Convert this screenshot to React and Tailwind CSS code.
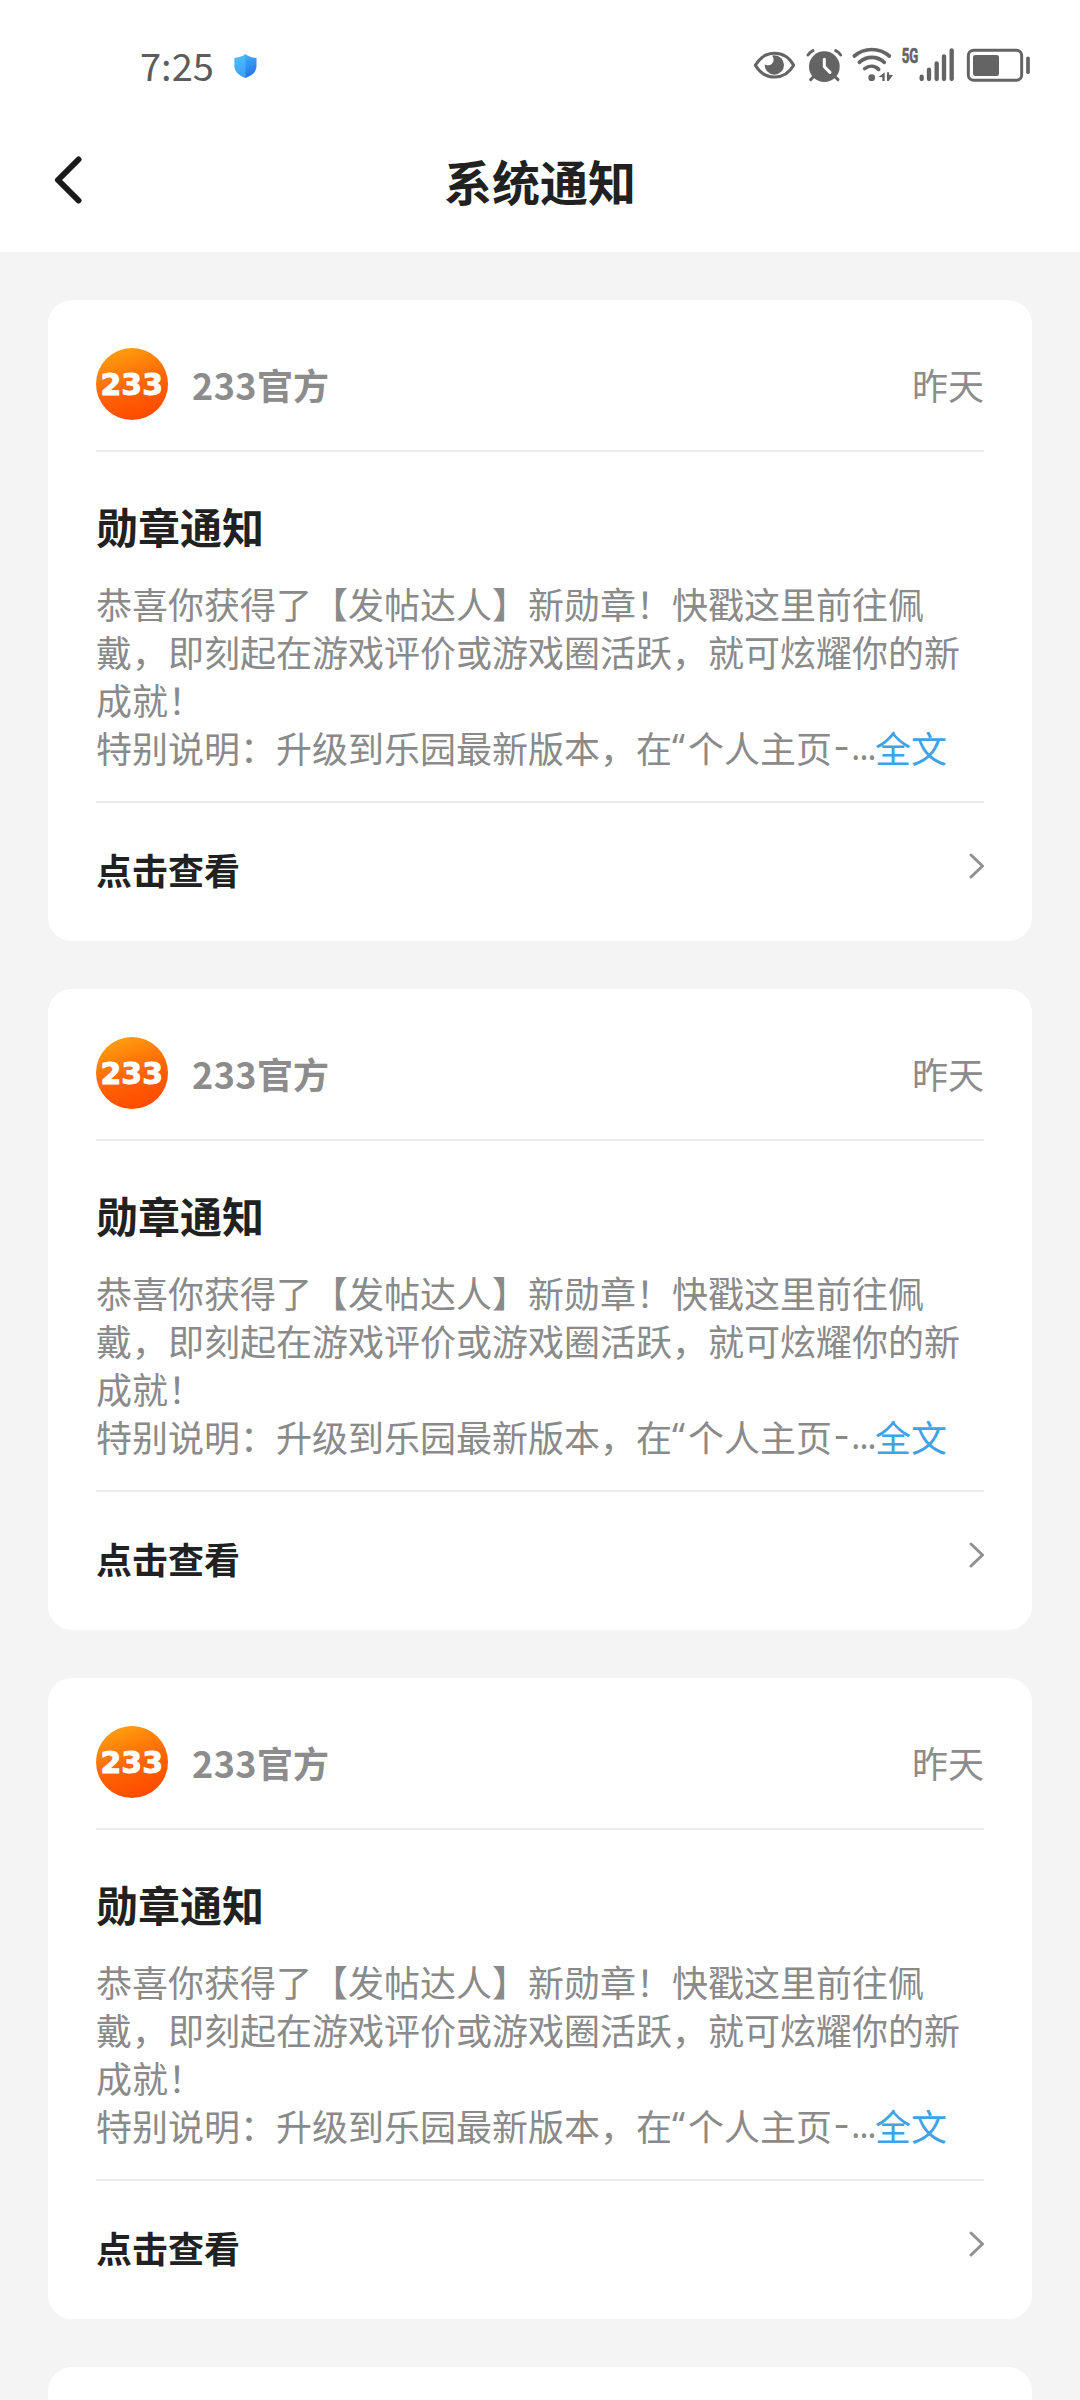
import React from 'react';

const notices = [1, 2, 3].map((id) => ({
  id,
  sender: '233官方',
  time: '昨天',
  title: '勋章通知',
  lines: ['恭喜你获得了【发帖达人】新勋章！快戳这里前往佩', '戴，即刻起在游戏评价或游戏圈活跃，就可炫耀你的新', '成就！'],
  action: '点击查看',
}));

const ShieldIcon = () => (
  <svg viewBox="0 0 68 72" className="w-[23px] h-6">
    <defs>
      <linearGradient id="shield" x1="0" y1="0" x2="0.3" y2="1">
        <stop offset="0" stopColor="#45b9f8" />
        <stop offset="1" stopColor="#2878ec" />
      </linearGradient>
    </defs>
    <path d="M34 0C43 8 54 11 67 12V36C67 54 52 65 34 72C16 65 1 54 1 36V12C14 11 25 8 34 0Z" fill="url(#shield)" />
    <path d="M34 0C25 8 14 11 1 12V36C1 54 16 65 34 72Z" fill="#5ccbff" opacity="0.45" />
  </svg>
);

const StatusIcons = () => (
  <div className="flex h-9 -mt-0.5 text-[#646464]">
    {/* Eye comfort */}
    <svg viewBox="36 36 150 108" className="w-[50px] h-9" fill="none" stroke="currentColor">
      <circle cx="103" cy="90" r="29" fill="currentColor" stroke="none" />
      <circle cx="84" cy="74" r="17" fill="white" stroke="none" />
      <path d="M46 91C74 43 134 43 161 91C134 138 74 138 46 91Z" strokeWidth="9" strokeLinejoin="round" />
    </svg>
    {/* Alarm */}
    <svg viewBox="186 36 138 108" className="w-[46px] h-9" fill="none" stroke="currentColor" strokeLinecap="round">
      <circle cx="253" cy="95" r="46" fill="currentColor" stroke="none" />
      <path d="M204 60Q210 51 219 47M302 60Q296 51 287 47" strokeWidth="9" />
      <path d="M220 126L212 134M286 126L294 134" strokeWidth="9" />
      <path d="M253 73V95L270 112" stroke="white" strokeWidth="9" strokeLinejoin="round" />
    </svg>
    {/* Wi-Fi */}
    <svg viewBox="324 36 150 108" className="w-[50px] h-9" fill="none" stroke="currentColor" strokeLinecap="round" strokeWidth="11">
      <path d="M343 63C373 37 418 37 448 63M358 82C380 62 411 62 433 82M374 101C387 91 404 91 416 103" />
      <circle cx="395" cy="128" r="10" fill="currentColor" stroke="none" />
      <path d="M416 126L434 112V138H427V127ZM441 112H447V119L459 120L446 138H441Z" fill="currentColor" stroke="none" />
    </svg>
    {/* Signal */}
    <svg viewBox="474 36 186 108" className="w-[62px] h-9 overflow-visible" fill="none" stroke="currentColor" strokeLinecap="round" strokeWidth="13">
      <text x="485" y="83" textLength="50" lengthAdjust="spacingAndGlyphs" fill="currentColor" strokeWidth="2" className="font-['Roboto','Noto_Sans_CJK_SC',sans-serif] text-[58px] font-bold">
        5G
      </text>
      <path d="M545 125V132M567 104V132M590 85V132M612 64V132M635 46V132" />
    </svg>
    {/* Battery */}
    <svg viewBox="660 36 216 108" className="w-[72px] h-9" fill="none" stroke="currentColor">
      <rect x="685" y="46" width="160" height="90" rx="16" strokeWidth="9" />
      <rect x="699" y="60" width="78" height="63" rx="7" fill="currentColor" stroke="none" />
      <path d="M864 70V112" strokeWidth="11" strokeLinecap="round" />
    </svg>
  </div>
);

const Avatar = () => (
  <svg viewBox="0 0 72 72" className="w-[72px] h-[72px] shrink-0">
    <defs>
      <linearGradient id="avatar" x1="0.2" y1="0" x2="0.55" y2="1">
        <stop offset="0" stopColor="#ffa310" />
        <stop offset="0.6" stopColor="#ff6205" />
        <stop offset="1" stopColor="#ff4b00" />
      </linearGradient>
    </defs>
    <circle cx="36" cy="36" r="36" fill="url(#avatar)" />
    <text x="4.5" y="47" textLength="62.5" lengthAdjust="spacingAndGlyphs" fill="white" stroke="white" strokeWidth="0.9" className="font-['DejaVu_Sans',sans-serif] text-[31px] font-bold">
      233
    </text>
  </svg>
);

const NoticeCard = ({ notice }) => (
  <article className="h-[641px] shrink-0 rounded-[24px] bg-white px-12">
    <div className="flex h-[152px] items-start border-b-2 border-[#ebebeb] pt-12">
      <Avatar />
      <span className="ml-6 mt-3 text-[36px] leading-[48px] font-bold text-[#8c8c8c]">
        <span className="tracking-[0.4px]">233</span>
        {notice.sender.slice(3)}
      </span>
      <span className="ml-auto mt-3 text-[36px] leading-[48px] text-[#8c8c8c]">{notice.time}</span>
    </div>

    <div className="h-[351px] border-b-2 border-[#ebebeb] pt-11">
      <h2 className="text-[42px] leading-[60px] font-bold text-[#212121]">{notice.title}</h2>
      <div className="mt-[23px] text-[36px] leading-[48px] text-[#8a8a8a] whitespace-nowrap">
        {notice.lines.map((line) => (
          <p key={line}>{line}</p>
        ))}
        <p className="flex">
          <span>特别说明：升级到乐园最新版本，在</span>
          <span className="w-4 font-['Noto_Sans','Noto_Sans_CJK_SC',sans-serif]">“</span>
          <span>个人主页</span>
          <span className="w-[19px] text-center font-['Inter',sans-serif]">-</span>
          <span className="w-6 font-['Open_Sans',sans-serif] tracking-[-1.3px]">...</span>
          <a className="text-[#3ea2e5]">全文</a>
        </p>
      </div>
    </div>

    <div className="flex items-center justify-between pt-[42px]">
      <span className="text-[36px] leading-[48px] font-bold text-[#212121]">{notice.action}</span>
      <svg viewBox="0 0 16 26" className="-mt-1.5 w-4 h-[26px]" fill="none" stroke="#919191" strokeWidth="3" strokeLinecap="round" strokeLinejoin="round">
        <path d="M3 2L14.5 13L3 24" />
      </svg>
    </div>
  </article>
);

export default function App() {
  return (
    <div className="flex h-[2400px] w-[1080px] flex-col overflow-hidden bg-[#f4f4f4] font-['Noto_Sans_CJK_SC',sans-serif]">
      <div className="flex h-[132px] shrink-0 items-center justify-between bg-white pl-[140px] pr-12">
        <div className="flex items-center">
          <span className="-mt-0.5 w-[94px] text-[38px] leading-[48px] font-normal text-[#5c5c5c]">7:25</span>
          <ShieldIcon />
        </div>
        <StatusIcons />
      </div>

      <header className="grid h-[120px] shrink-0 grid-cols-3 items-center bg-white pb-[22px]">
        <svg viewBox="0 0 28 48" className="-mt-0.5 ml-[54px] w-7 h-12" fill="none" stroke="#1a1a1a" strokeWidth="6" strokeLinecap="round" strokeLinejoin="round">
          <path d="M24.5 3.5L4 24L24.5 44.5" />
        </svg>
        <h1 className="-mt-0.5 text-center text-[48px] leading-[64px] font-bold text-[#212121]">系统通知</h1>
      </header>

      <main className="flex flex-col gap-12 px-12 pt-12">
        {notices.map((notice) => (
          <NoticeCard key={notice.id} notice={notice} />
        ))}
        {/* Top edge of the next card */}
        <div className="h-[33px] rounded-t-[24px] bg-white" />
      </main>
    </div>
  );
}
